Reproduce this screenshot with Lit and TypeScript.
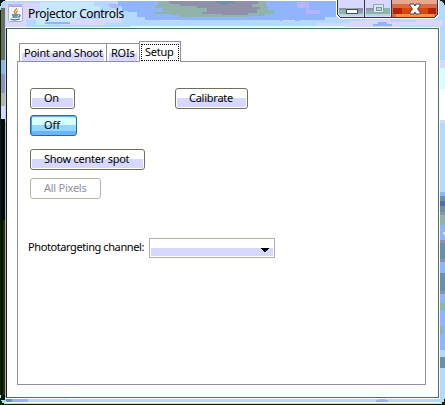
import { LitElement, html, css, svg } from "lit";
import { customElement } from "lit/decorators.js";

const glass: [string, string][] = [
  ["#b4d8ff", "M0 0H445V405H0Z"],
  // title bar glass
  ["#90b4ff", "M130 1H336V17H325V20H300V21H280V20H180V21H162V20H145V17H137V12H128Z"],
  ["#d8d8ff", "M6 3H42V12H36V20H26V27H6Z M60 19H106V17H122V23H106V25H60Z"],
  ["#b4b4ff", "M8 4H22V9H15V18H8Z M50 3H64V7H58V10H50Z M108 4H119V8H111Z M297 2H309V10H320V14H306V8H297Z"],
  ["#c8e8ff", "M40 2H94V6H100V12H90V18H77V22H49V25H36V12H40Z M108 10H121V17H114V20H101V15H108Z"],
  ["#d8ffff", "M130 26H360V28H130Z"],
  ["#90b4ff", "M118 1H136V7H130V11H122V6H118Z M45 22H70V24H45Z"],
  ["#90b4aa", "M158 1H266V6H268V10H274V14H265V16H250V17H179V15H171V14H154V12H163V8H155V5H158Z"],
  ["#9090aa", "M169 1H258V4H252V7H260V9H257V13H248V15H222V14H202V12H207V8H197V6H180V4H169Z"],
  ["#6c90aa", "M216 1H234V3H228V5H220V3H216Z"],
  ["#d8d8ff", "M162 20H180V21H162Z M282 20H295V21H282Z M316 23H350V21H362V20H390V22H416V20H443V26H400V28H345V26H316Z"],
  ["#90b4ff", "M378 22H387V24H392V26H373V24H378Z"],
  // left edge
  ["#68705c", "M1 8H5V60H1Z"],
  ["#90b4d8", "M1 60H5V74H1Z"],
  ["#9090b0", "M1 74H5V93H1Z"],
  ["#b4b4aa", "M1 93H5V106H1Z"],
  ["#d8d8ff", "M1 106H5V119H1Z"],
  ["#000c18", "M1 119H5V220H1Z"],
  ["#001800", "M1 220H5V400H1Z"],
  ["#302800", "M3 220H5V395H3Z"],
  ["#a0b8a8", "M5 122H6V397H5Z"],
  // right edge
  ["#d8d8ff", "M440 60H445V68H440Z M440 120H445V123H440Z"],
  ["#d8ffff", "M440 68H445V89H440Z"],
  ["#ffffff", "M440 89H445V120H440Z"],
  ["#90b4ff", "M440 192H445V350H440Z"],
  ["#6c90aa", "M440 196H445V212H440Z M440 242H445V260H440Z M440 273H445V292H440Z M440 357H445V368H440Z"],
  ["#5b69aa", "M440 201H445V206H440Z"],
  ["#90b4aa", "M440 215H445V225H440Z M440 303H445V310H440Z M440 327H443V334H440Z"],
  ["#9090aa", "M440 212H445V215H440Z M440 240H445V243H440Z M440 259H445V262H440Z M440 291H445V294H440Z"],
  ["#d8d8ff", "M443 232H445V235H443Z"],
  // bottom edge
  ["#6c90aa", "M6 398H13V402H6Z"],
  ["#90b4ff", "M12 398H28V402H12Z M376 402V400H379V398H385V400H388V402Z"],
  ["#d8d8ff", "M38 398H60V399H38Z M80 398H90V399H80Z M68 399H80V400H68Z"],
  ["#d8ffff", "M90 398H148V399H90Z"],
  ["#ffffff", "M5 27H440V28H5Z M439 28H440V398H439Z M5 398H440V399H5Z M6 0H337V1H6Z M5 402H440V403H5Z"],
  ["#102008", "M0 10H1V395H0Z M5 404H440V405H5Z"],
  ["#102008", "M0 0H5V1H3V2H2V3H1V6H0Z M445 0H440V1H442V2H443V3H444V5H445Z M0 405V398H1V401H2V403H4V404H6V405Z M445 405V399H444V402H442V404H440V405Z"],
];

const backdrop = svg`${glass.map(([fill, d]) => svg`<path fill=${fill} d=${d} />`)}`;

@customElement("app-root")
export class AppRoot extends LitElement {
  static styles = css`
    :host {
      display: block;
      width: 445px;
      height: 405px;
      overflow: hidden;
      font: 11px/14px "Noto Sans", sans-serif;
      letter-spacing: -0.25px;
      color: #000;
    }
    * { box-sizing: border-box; }
    .window {
      position: relative;
      width: 445px;
      height: 405px;
      padding: 0 6px 7px;
      display: flex;
      flex-direction: column;
      isolation: isolate;
    }
    .glass { position: absolute; inset: 0; z-index: -1; }
    .titlebar { height: 28px; display: flex; align-items: flex-start; flex: none; }
    .java { margin: 6px 0 0 2px; }
    .title {
      margin: 5px 0 0 5px;
      font: 12px/18px "Noto Sans", sans-serif;
      flex: 1;
      white-space: nowrap;
      letter-spacing: -0.34px;
    }
    .controls { display: block; }
    .client {
      flex: 1;
      width: 433px;
      background: #fff;
      border: 1px solid #487058;
      border-left-color: #182018;
      padding: 12px 12px 12px 10px;
      display: flex;
      flex-direction: column;
    }
    .tabs { display: flex; align-items: flex-end; height: 20px; padding-left: 2px; flex: none; }
    .tab {
      height: 18px;
      border: 1px solid #9090aa;
      border-bottom: 0;
      margin-right: -1px;
      padding: 2px 0 0 4px;
      white-space: nowrap;
      background: linear-gradient(#d8d8ff, #d8d8ff) 2px 9px / calc(100% - 4px) 8px no-repeat #fff;
    }
    .shoot { width: 88px; }
    .rois { width: 34px; }
    .setup {
      width: 42px;
      height: 21px;
      margin-bottom: -1px;
      padding: 2px 1px 1px;
      background: #fff;
      position: relative;
    }
    .focus { border: 1px dotted #000; height: 17px; padding: 0 0 0 3px; line-height: 13px; }
    .panel {
      flex: 1;
      border: 1px solid #9090aa;
      padding: 26px 12px;
      display: flex;
      flex-direction: column;
      align-items: flex-start;
    }
    .row { display: flex; }
    .btn {
      height: 21px;
      border: 1px solid #70705a;
      border-radius: 3px;
      padding: 2px 0 0 13px;
      white-space: nowrap;
      background: linear-gradient(#d8d8ff, #d8d8ff) 1px 9px / calc(100% - 2px) 9px no-repeat #fff;
    }
    .on { width: 45px; }
    .calibrate { width: 73px; margin-left: 100px; }
    .off {
      width: 47px;
      margin-top: 6px;
      border-color: #246c9c;
      background: linear-gradient(#b4ffff 0 2px, #d8ffff 2px 9px, #90d8ff 9px 15px, #6cb4ff 15px);
      box-shadow: inset 1px 0 #48a4d8, inset 0 1px #6cb4d8;
      letter-spacing: 0;
    }
    .center { width: 115px; margin-top: 13px; }
    .pixels { width: 71px; margin-top: 8px; border-color: #b4b4a4; color: #9090a0; background: #fff; }
    .channel { display: flex; margin-top: 39px; margin-left: -2px; }
    .label { width: 121px; padding-top: 2px; white-space: nowrap; letter-spacing: -0.41px; }
    .combo {
      width: 126px;
      height: 20px;
      border: 1px solid #b0b0a4;
      display: flex;
      justify-content: flex-end;
      align-items: flex-start;
      padding: 9px 5px 0 0;
      background: linear-gradient(#d8d8ff, #d8d8ff) 1px 9px / calc(100% - 2px) 8px no-repeat #fff;
    }
  `;

  render() {
    return html`
      <div class="window">
        <svg class="glass" width="445" height="405" shape-rendering="crispEdges">${backdrop}</svg>
        <div class="titlebar">
          <svg class="java" width="15" height="16" viewBox="0 0 15 16">
            <rect x=".5" y=".5" width="14" height="15" rx="1" fill="#f0f4fc" stroke="#a8b0c0" />
            <path d="M8.5 2C9 4 5.5 4.5 6.5 6.5L7.5 8M10 4.5C7.5 5.5 8.5 6.5 8 8" fill="none" stroke="#e87820" stroke-width="1.3" />
            <path d="M4 9H10M4.5 11H9.5M10.5 8.7C13 8.5 12 11 10 11.2M2.5 13C5 14.2 10 14 12 12.7" fill="none" stroke="#48709c" stroke-width="1.3" />
          </svg>
          <div class="title">Projector Controls</div>
          <svg class="controls" width="103" height="19" viewBox="0 0 103 19" shape-rendering="crispEdges">
            <path d="M0 0H103V15L100 19H3L0 16Z" fill="#fff" />
            <path d="M1 0H102V14L99 18H4L1 15Z" fill="#303848" />
            <path d="M2 0H28V17H4L2 15Z M29 0H55V17H29Z" fill="#d8d8ff" />
            <path d="M3 8H27V14H3Z M30 8H54V14H30Z" fill="#90b4aa" />
            <path d="M3 8H10V10H3Z M21 8H27V12H21Z M30 8H37V10H30Z" fill="#9090aa" />
            <path d="M3 14H27V16H3Z M30 14H54V16H30Z" fill="#b4d8d8" />
            <path d="M56 0H101V14L98 17H56Z" fill="#d86c48" />
            <path d="M56 0H101V4H56Z" fill="#e8a890" />
            <path d="M57 8H100V14H57Z" fill="#b42400" />
            <path d="M66 8H92V14H66Z" fill="#d84800" />
            <path d="M60 14H98V17H60Z" fill="#ff9048" />
            <rect x="10.5" y="9.5" width="11" height="4" fill="#fff" stroke="#484858" />
            <rect x="37.5" y="4.5" width="10" height="8" fill="#d8e8e8" stroke="#90a8b0" />
            <rect x="40.5" y="7.5" width="5" height="3" fill="#b4d8d8" stroke="#7898a0" />
            <path d="M74 4H78L79 6L80 4H84V6L81.5 9L84 12V14H80L79 12L78 14H74V12L76.5 9L74 6Z" fill="#fff" stroke="#504050" shape-rendering="auto" />
          </svg>
        </div>
        <div class="client">
          <div class="tabs">
            <div class="tab shoot">Point and Shoot</div>
            <div class="tab rois">ROIs</div>
            <div class="tab setup"><div class="focus">Setup</div></div>
          </div>
          <div class="panel">
            <div class="row">
              <div class="btn on">On</div>
              <div class="btn calibrate">Calibrate</div>
            </div>
            <div class="btn off">Off</div>
            <div class="btn center">Show center spot</div>
            <div class="btn pixels">All Pixels</div>
            <div class="channel">
              <div class="label">Phototargeting channel:</div>
              <div class="combo">
                <svg width="8" height="4" shape-rendering="crispEdges"><path d="M0 0H8V1H7V2H6V3H5V4H3V3H2V2H1V1H0Z" /></svg>
              </div>
            </div>
          </div>
        </div>
      </div>
    `;
  }
}
